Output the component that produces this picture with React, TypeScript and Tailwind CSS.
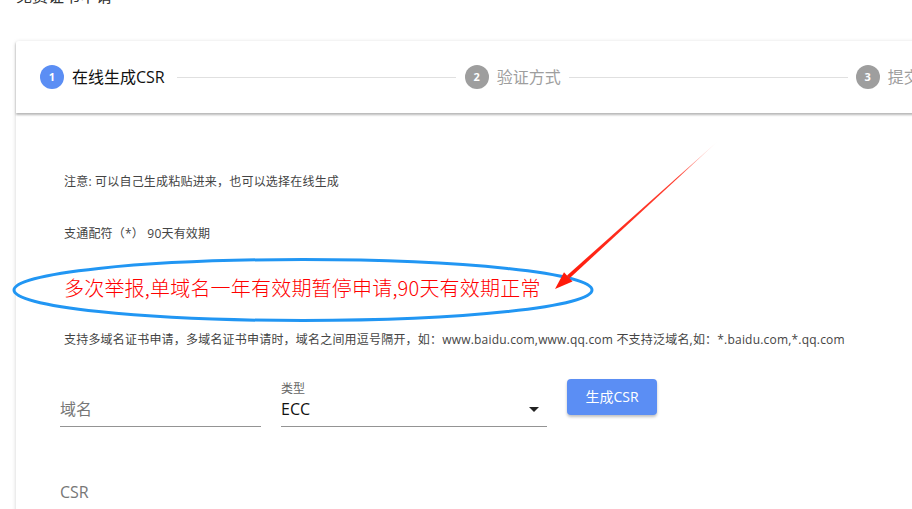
import React from 'react';

const sans = "font-['Open_Sans','Noto_Sans_CJK_SC',sans-serif]";

function Step({ n, label, active = false }: { n: number; label: string; active?: boolean }) {
  return (
    <div className="flex items-center gap-2 shrink-0">
      <div
        className={`w-6 h-6 rounded-full flex items-center justify-center text-[11px] font-bold text-white ${
          active ? 'bg-[#5b8ef4]' : 'bg-[#9e9e9e]'
        }`}
      >
        {n}
      </div>
      <span className={`text-base leading-6 ${active ? 'text-[#111]' : 'text-[#9e9e9e]'}`}>{label}</span>
    </div>
  );
}

function Annotation() {
  // blue ellipse + red arrow drawn over the content
  return (
    <svg className="absolute left-0 top-0 pointer-events-none" width="912" height="509">
      <defs>
        <linearGradient id="arrowFade" x1="718" y1="141" x2="560" y2="283" gradientUnits="userSpaceOnUse">
          <stop offset="0" stopColor="#ff2a1a" stopOpacity="0" />
          <stop offset="0.25" stopColor="#ff2a1a" stopOpacity="0.9" />
          <stop offset="1" stopColor="#ff1a0a" />
        </linearGradient>
      </defs>
      <ellipse cx="303" cy="290" rx="289" ry="30.5" fill="none" stroke="#2196f3" strokeWidth="3" />
      <polygon points="718,141 569.6,278.3 567,275.5" fill="url(#arrowFade)" />
      <polygon points="555,289 572.5,281.5 564,272.3" fill="#ff1a0a" />
    </svg>
  );
}

export default function App() {
  return (
    <div className={`relative w-[912px] h-[509px] overflow-hidden bg-white ${sans}`}>
      <div className="-mt-4 pl-4 text-base leading-6 text-[#333]">免费证书申请</div>

      <div className="ml-4 mt-[33px] w-[1100px] bg-white shadow-[0_1px_4px_rgba(0,0,0,0.18)] rounded-[3px]">
        {/* stepper header */}
        <div className="relative z-10 h-[72px] flex items-center pl-6 shadow-[0_2px_2px_rgba(0,0,0,0.28)]">
          <Step n={1} label="在线生成CSR" active />
          <div className="ml-3 mr-[9px] w-[279px] h-px bg-[#e0e0e0]" />
          <Step n={2} label="验证方式" />
          <div className="mx-2 w-[279px] h-px bg-[#e0e0e0]" />
          <Step n={3} label="提交订单" />
        </div>

        {/* body */}
        <div className="pl-[44px] pt-[60px] pb-10">
          <p className="pl-1 text-xs leading-[18px] text-[#444] tracking-[0.2px]">注意: 可以自己生成粘贴进来，也可以选择在线生成</p>
          <p className="pl-1 mt-[34px] text-xs leading-[18px] text-[#444] tracking-[0.2px]">支通配符（*） 90天有效期</p>
          <p className="pl-1 mt-[31px] text-xl leading-7 font-light text-[#ff0000] font-['Noto_Sans_CJK_SC',sans-serif] tracking-[0.2px]">
            多次举报,单域名一年有效期暂停申请,90天有效期正常
          </p>
          <p className="pl-1 mt-[29px] text-xs leading-[18px] text-[#444] tracking-[0.2px]">
            支持多域名证书申请，多域名证书申请时，域名之间用逗号隔开，如：www.baidu.com,www.qq.com 不支持泛域名,如：*.baidu.com,*.qq.com
          </p>

          <div className="mt-[30px] flex items-start gap-5">
            <div className="w-[201px] pt-[2px]">
              <div className="h-4 text-xs leading-4 text-transparent">.</div>
              <div className="pb-[5px] text-base leading-6 text-[#777] border-b border-[#949494]">域名</div>
            </div>
            <div className="w-[266px] pt-[2px]">
              <div className="h-4 text-xs leading-4 text-[#666]">类型</div>
              <div className="pb-[5px] flex items-center justify-between border-b border-[#949494]">
                <span className="text-base leading-6 text-[#111]">ECC</span>
                <span className="mr-2 w-0 h-0 border-l-[5px] border-r-[5px] border-t-[5px] border-l-transparent border-r-transparent border-t-[#222]" />
              </div>
            </div>
            <button className="w-[90px] h-9 rounded bg-[#5b8ef4] text-white text-sm shadow-[0_2px_3px_rgba(0,0,0,0.25)]">
              生成CSR
            </button>
          </div>

          <div className="mt-[53px] text-base leading-6 text-[#777]">CSR</div>
        </div>
      </div>

      <Annotation />
    </div>
  );
}
